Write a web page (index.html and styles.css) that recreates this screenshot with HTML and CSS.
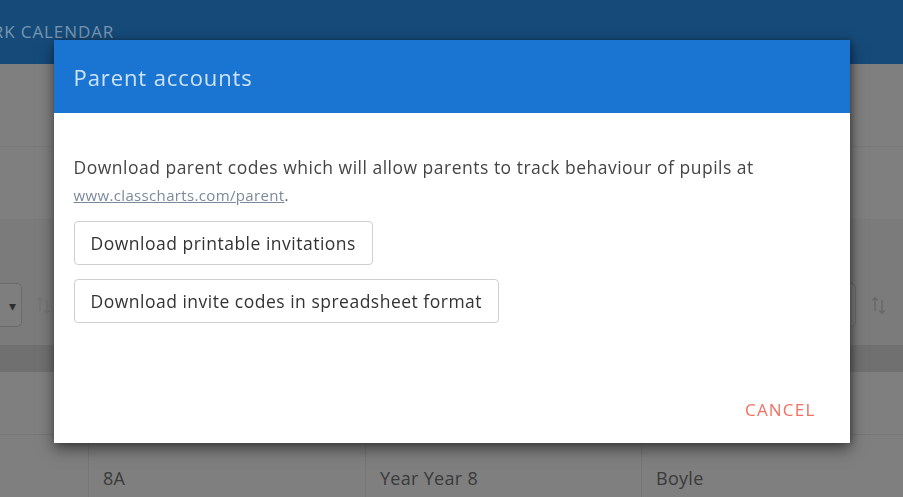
FILE: index.html
```html
<!DOCTYPE html>
<html lang="en">
<head>
<meta charset="utf-8">
<title>Parent accounts</title>
<link rel="stylesheet" href="styles.css">
</head>
<body>
<div class="page">
  <header class="topbar">
    <nav class="nav"><span class="nav-item">HOMEWORK CALENDAR</span></nav>
  </header>
  <section class="title-band"></section>
  <section class="sub-band"></section>
  <section class="filters">
    <div class="filter-left">
      <div class="select"><span class="caret">▾</span></div>
      <svg class="sort-icon sort-left" width="16" height="22" viewBox="0 0 16 22" aria-hidden="true">
        <path d="M4 17V4M1.5 6.5L4 3.5L6.5 6.5" fill="none" stroke="#747474" stroke-width="1.4"/>
        <path d="M11 6V19M8.5 16.5L11 19.5L13.5 16.5" fill="none" stroke="#747474" stroke-width="1.4"/>
      </svg>
    </div>
    <div class="filter-right">
      <div class="select select-right"></div>
      <svg class="sort-icon" width="16" height="22" viewBox="0 0 16 22" aria-hidden="true">
        <path d="M4 17V4M1.5 6.5L4 3.5L6.5 6.5" fill="none" stroke="#686868" stroke-width="1.4"/>
        <path d="M11 6V19M8.5 16.5L11 19.5L13.5 16.5" fill="none" stroke="#686868" stroke-width="1.4"/>
      </svg>
    </div>
  </section>
  <div class="thead"></div>
  <div class="row row-empty"></div>
  <div class="row">
    <div class="cell cell-first"></div>
    <div class="cell">8A</div>
    <div class="cell">Year Year 8</div>
    <div class="cell">Boyle</div>
  </div>
</div>

<div class="overlay">
  <div class="modal">
    <div class="modal-header">
      <h2 class="modal-title">Parent accounts</h2>
    </div>
    <div class="modal-body">
      <p class="intro">Download parent codes which will allow parents to track behaviour of pupils at</p>
      <p class="link-line"><a class="link" href="#">www.classcharts.com/parent</a>.</p>
      <div class="actions">
        <button class="btn">Download printable invitations</button>
        <button class="btn">Download invite codes in spreadsheet format</button>
      </div>
    </div>
    <div class="modal-footer">
      <button class="cancel">CANCEL</button>
    </div>
  </div>
</div>
</body>
</html>
```

FILE: styles.css
```css
* { box-sizing: border-box; }
html, body { margin: 0; padding: 0; }
body {
  font-family: "Open Sans", "Noto Sans", sans-serif;
  background: #7f7f7f;
  width: 903px;
  height: 497px;
  overflow: hidden;
}
.page {
  display: flex;
  flex-direction: column;
  height: 497px;
  background: #7f7f7f;
}
.topbar {
  height: 64px;
  background: #154a79;
  display: flex;
  align-items: flex-start;
  flex-shrink: 0;
}
.nav {
  display: flex;
  padding-top: 20px;
}
.nav-item {
  color: #7895b1;
  font-size: 17px;
  letter-spacing: 0.9px;
  margin-left: -92px;
  white-space: nowrap;
}
.title-band {
  height: 83px;
  border-bottom: 1px solid #797979;
  flex-shrink: 0;
}
.sub-band {
  height: 73px;
  border-bottom: 1px solid #7a7a7a;
  flex-shrink: 0;
}
.filters {
  height: 125px;
  background: #7b7b7b;
  display: flex;
  justify-content: space-between;
  align-items: flex-start;
  padding-top: 63px;
  flex-shrink: 0;
}
.filter-left, .filter-right {
  display: flex;
  align-items: center;
  gap: 14px;
}
.select {
  width: 60px;
  height: 44px;
  border: 1px solid #6a6a6a;
  border-radius: 5px;
  background: #7e7e7e;
  display: flex;
  align-items: center;
  justify-content: flex-end;
  padding-right: 5px;
  margin-left: -38px;
}
.caret { color: #2e2e2e; font-size: 14px; }
.select-right { margin-left: 0; }
.filter-right { margin-right: 16px; gap: 15px; }
.sort-icon { display: block; }
.thead {
  height: 27px;
  background: #707070;
  flex-shrink: 0;
}
.row-empty {
  height: 71px;
  border-bottom: 1px solid #767676;
  flex-shrink: 0;
}
.row {
  display: grid;
  grid-template-columns: 88px 277px 276px 1fr;
  flex: 1;
}
.cell {
  border-left: 1px solid #767676;
  padding: 31px 14px 0;
  color: #3a3a3a;
  font-size: 18px;
  letter-spacing: 0.3px;
}
.cell-first { border-left: none; }

.overlay {
  position: fixed;
  inset: 0;
  display: flex;
  justify-content: center;
  align-items: flex-start;
  padding-top: 40px;
}
.modal {
  width: 796px;
  height: 403px;
  background: #ffffff;
  box-shadow: 0 6px 14px rgba(0,0,0,0.5), 2px 0 6px rgba(0,0,0,0.25);
  display: flex;
  flex-direction: column;
}
.modal-header {
  height: 73px;
  background: #1a75d2;
  display: flex;
  align-items: center;
  padding-left: 20px;
}
.modal-title {
  margin: 0;
  font-weight: 400;
  font-size: 22px;
  letter-spacing: 0.9px;
  color: #cde3f8;
}
.modal-body {
  padding: 42px 20px 0;
  flex: 1;
}
.intro {
  margin: 0;
  font-size: 17.5px;
  letter-spacing: 0.5px;
  color: #454545;
  line-height: 24px;
}
.link-line {
  margin: 6px 0 0;
  font-size: 15px;
  letter-spacing: 0.35px;
  color: #555;
  line-height: 20px;
}
.link {
  color: #7a8a9a;
  text-decoration: underline;
}
.actions {
  margin-top: 16px;
  display: flex;
  flex-direction: column;
  align-items: flex-start;
  gap: 14px;
}
.btn {
  font-family: "Open Sans", "Noto Sans", sans-serif;
  font-size: 17.5px;
  letter-spacing: 0.5px;
  color: #333;
  background: #fff;
  border: 1px solid #cfcfcf;
  border-radius: 4px;
  height: 44px;
  padding: 0 16px;
}
.modal-footer {
  display: flex;
  justify-content: flex-end;
  padding: 0 34px 22px 0;
}
.cancel {
  font-family: "Open Sans", "Noto Sans", sans-serif;
  background: none;
  border: none;
  padding: 0;
  font-size: 17px;
  letter-spacing: 1.2px;
  color: #f2705f;
}
```
